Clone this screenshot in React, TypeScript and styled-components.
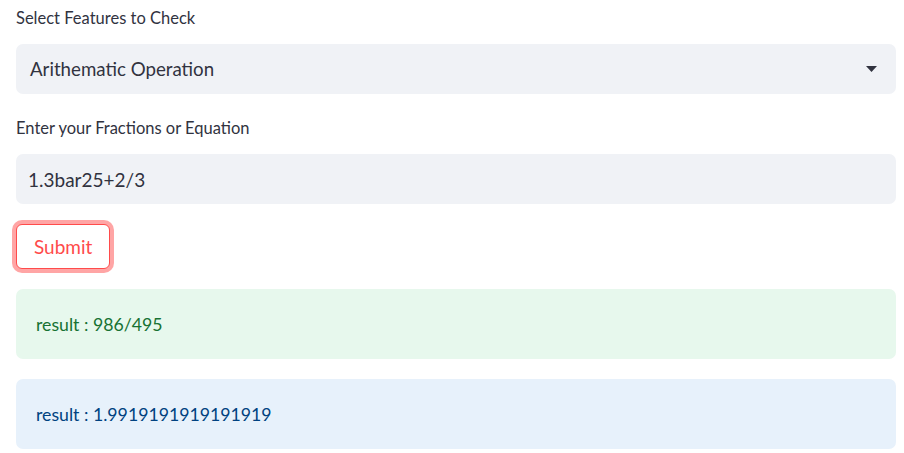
import React from "react";
import styled, { createGlobalStyle } from "styled-components";

const Global = createGlobalStyle`
  html, body { margin: 0; padding: 0; background: #ffffff; }
  body { font-family: Lato, "Liberation Sans", sans-serif; color: #31333f; }
  * { box-sizing: border-box; }
`;

const Page = styled.div`
  display: flex;
  flex-direction: column;
  gap: 20px;
  padding: 4px 8px 0 16px;
  width: 904px;
`;

const Field = styled.div`
  display: flex;
  flex-direction: column;
  gap: 10px;
`;

const Label = styled.label`
  font-size: 16.5px;
  line-height: 28px;
  height: 30px;
  color: #31333f;
`;

const Box = styled.div`
  height: 50px;
  width: 880px;
  background: #f0f2f6;
  border-radius: 7px;
  display: flex;
  align-items: center;
  font-size: 18.7px;
  color: #31333f;
`;

const SelectBox = styled(Box)`
  padding: 0 19px 0 14px;
  justify-content: space-between;
`;

const InputBox = styled(Box)`
  padding: 0 12px;
  font-size: 19px;
`;

const Caret = styled.svg`
  width: 11px;
  height: 6px;
`;

const ButtonRow = styled.div`
  display: flex;
`;

const Button = styled.button`
  height: 45px;
  padding: 0 17px;
  border: 1px solid #ff4b4b;
  border-radius: 6px;
  background: #ffffff;
  color: #ff4b4b;
  font-family: Lato, "Liberation Sans", sans-serif;
  font-size: 19px;
  box-shadow: 0 0 0 4px rgba(255, 75, 75, 0.5);
  cursor: pointer;
`;

const Alert = styled.div<{ $tone: "success" | "info" }>`
  width: 880px;
  height: 70px;
  padding: 0 20px;
  display: flex;
  align-items: center;
  border-radius: 7px;
  font-size: 17.7px;
  background: ${(p) => (p.$tone === "success" ? "#e7f8ed" : "#e7f1fb")};
  color: ${(p) => (p.$tone === "success" ? "#177233" : "#004280")};
`;

export default function App() {
  return (
    <>
      <Global />
      <Page>
        <Field>
          <Label>Select Features to Check</Label>
          <SelectBox>
            <span>Arithematic Operation</span>
            <Caret viewBox="0 0 11 6">
              <path d="M0 0 L11 0 L5.5 6 Z" fill="#31333f" />
            </Caret>
          </SelectBox>
        </Field>
        <Field>
          <Label>Enter your Fractions or Equation</Label>
          <InputBox>1.3bar25+2/3</InputBox>
        </Field>
        <ButtonRow>
          <Button>Submit</Button>
        </ButtonRow>
        <Alert $tone="success">result : 986/495</Alert>
        <Alert $tone="info">result : 1.9919191919191919</Alert>
      </Page>
    </>
  );
}
